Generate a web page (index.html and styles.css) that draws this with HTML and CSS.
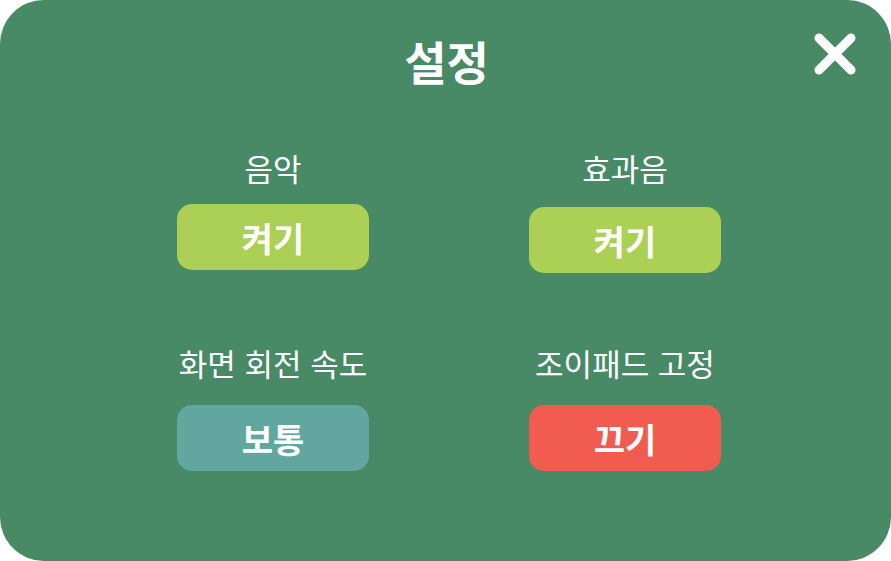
FILE: index.html
```html
<!DOCTYPE html>
<html lang="ko">
<head>
<meta charset="utf-8">
<link rel="stylesheet" href="styles.css">
</head>
<body>
<div class="panel">
  <header class="head">
    <h1 class="title">설정</h1>
    <button class="close" aria-label="닫기">
      <svg width="44" height="44" viewBox="0 0 44 44"><path d="M6 6 L38 38 M38 6 L6 38" stroke="#fff" stroke-width="9" stroke-linecap="round" fill="none"/></svg>
    </button>
  </header>
  <div class="grid">
    <div class="cell">
      <div class="label">음악</div>
      <div class="btn btn-on">켜기</div>
    </div>
    <div class="cell cell-shift">
      <div class="label">효과음</div>
      <div class="btn btn-on">켜기</div>
    </div>
    <div class="cell cell-low">
      <div class="label">화면 회전 속도</div>
      <div class="btn btn-mid">보통</div>
    </div>
    <div class="cell cell-low">
      <div class="label">조이패드 고정</div>
      <div class="btn btn-off">끄기</div>
    </div>
  </div>
</div>
</body>
</html>
```
FILE: styles.css
```css
html, body {
  margin: 0;
  padding: 0;
  background: #ffffff;
}
body {
  font-family: "Noto Sans CJK KR", "Noto Sans", sans-serif;
  color: #ffffff;
}
.panel {
  width: 891px;
  height: 561px;
  background: #478a65;
  border-radius: 44px;
  box-sizing: border-box;
  padding-top: 30px;
  position: relative;
}
.head {
  height: 60px;
  display: flex;
  justify-content: center;
  align-items: center;
}
.title {
  margin: 0;
  font-size: 46px;
  font-weight: 700;
  line-height: 60px;
  padding-left: 2px;
}
.close {
  position: absolute;
  top: 32px;
  right: 34px;
  width: 44px;
  height: 44px;
  padding: 0;
  border: 0;
  background: none;
}
.close svg { display: block; }
.grid {
  margin-top: 60px;
  padding-left: 7px;
  display: grid;
  grid-template-columns: 192px 192px;
  column-gap: 160px;
  row-gap: 72px;
  justify-content: center;
}
.cell {
  display: flex;
  flex-direction: column;
  align-items: center;
}
.label {
  font-size: 31px;
  line-height: 36px;
  height: 36px;
  margin-bottom: 18px;
  white-space: nowrap;
}
.cell-shift .label { margin-bottom: 21px; }
.cell-low .label { margin-bottom: 24px; }
.btn {
  width: 192px;
  height: 66px;
  border-radius: 15px;
  display: flex;
  align-items: center;
  justify-content: center;
  font-size: 34px;
  font-weight: 700;
}
.btn-on { background: #abd055; }
.btn-mid { background: #62a79f; }
.btn-off { background: #f25b4f; }
```
